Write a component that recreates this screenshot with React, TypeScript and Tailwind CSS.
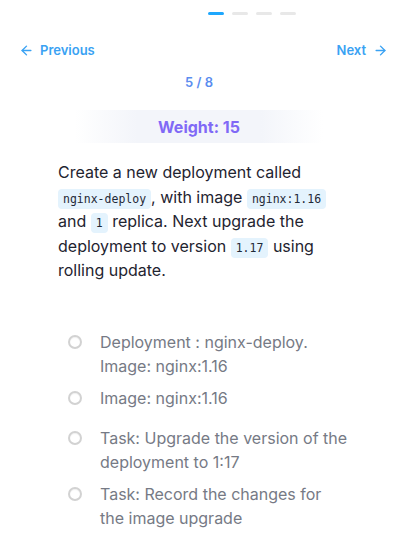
import React from "react";
import { ArrowLeft, ArrowRight } from "lucide-react";

const Code = ({ children }: { children: React.ReactNode }) => (
  <code className="rounded-[4px] bg-[#e4f3fd] px-[5px] py-[3px] align-baseline font-['DejaVu_Sans_Mono',monospace] text-[11.5px] leading-none text-[#1f2937]">
    {children}
  </code>
);

const Option = ({ text, extra }: { text: string; extra?: string }) => (
  <div className={"flex items-start " + (extra ?? "")}>
    <div className="ml-[68px] mt-[5px] h-[14px] w-[14px] shrink-0 rounded-full border-[2.5px] border-[#d2d2d2] bg-white shadow-[inset_0_1px_1px_rgba(0,0,0,0.06)]" />
    <div className="ml-[18px] w-[248px] text-base leading-6 text-[#767a85]">{text}</div>
  </div>
);

export default function App() {
  return (
    <div className="h-[533px] w-[398px] overflow-hidden bg-white font-['Inter',sans-serif]">
      <div className="flex gap-2 pl-[208px] pt-3">
        <div className="h-[3px] w-4 rounded-full bg-[#1ea7fd]" />
        <div className="h-[3px] w-4 rounded-full bg-[#e8e8e8]" />
        <div className="h-[3px] w-4 rounded-full bg-[#e8e8e8]" />
        <div className="h-[3px] w-4 rounded-full bg-[#e8e8e8]" />
      </div>
      <div className="mt-[27px] flex items-center justify-between pl-[19px] pr-[10px] text-[13px] font-semibold leading-4 text-[#3aa2f3]">
        <div className="flex items-center gap-[6px]">
          <ArrowLeft size={15} strokeWidth={2.25} />
          <span>Previous</span>
        </div>
        <div className="flex items-center gap-[7px]">
          <span>Next</span>
          <ArrowRight size={15} strokeWidth={2.25} />
        </div>
      </div>
      <div className="mt-4 text-center text-[13px] font-semibold leading-4 text-[#5b8def]">5 / 8</div>
      <div className="mx-[75px] mt-5 flex h-[33px] items-center justify-center bg-[linear-gradient(90deg,rgba(244,246,251,0),#f3f5fa_25%,#f3f5fa_75%,rgba(244,246,251,0))] text-base font-bold text-[#8069f6]">
        Weight: 15
      </div>
      <p className="mx-[58px] mt-[17px] text-base leading-[24.5px] text-[#1f2430]">
        Create a new deployment called <Code>nginx-deploy</Code>, with image <Code>nginx:1.16</Code> and{" "}
        <Code>1</Code> replica. Next upgrade the deployment to version <Code>1.17</Code> using rolling update.
      </p>
      <div className="mt-[47px] flex flex-col">
        <Option text="Deployment : nginx-deploy. Image: nginx:1.16" />
        <Option text="Image: nginx:1.16" extra="mt-2" />
        <Option text="Task: Upgrade the version of the deployment to 1:17" extra="mt-4" />
        <Option text="Task: Record the changes for the image upgrade" extra="mt-2" />
      </div>
    </div>
  );
}
